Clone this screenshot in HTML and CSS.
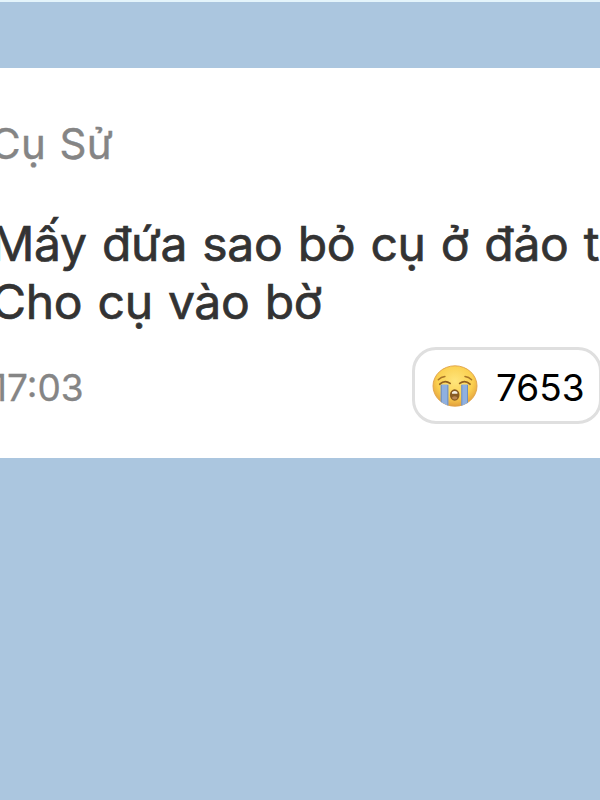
FILE: index.html
```html
<!DOCTYPE html>
<html lang="vi">
<head>
<meta charset="utf-8">
<title>Cụ Sử</title>
<link rel="stylesheet" href="styles.css">
</head>
<body>
<main class="chat">
  <article class="card">
    <div class="name">Cụ Sử</div>
    <div class="message"><div class="line">Mấy đứa sao bỏ cụ ở đảo t</div><div class="line second">Cho cụ vào bờ</div></div>
    <footer class="footer">
      <time class="time">17:03</time>
      <div class="reaction">
        <svg class="emoji" viewBox="0 0 46 42">
          <defs>
            <radialGradient id="face" cx="50%" cy="38%" r="62%">
              <stop offset="0" stop-color="#ffe57c"/>
              <stop offset=".65" stop-color="#fbd050"/>
              <stop offset="1" stop-color="#e3a03c"/>
            </radialGradient>
            <clipPath id="round"><ellipse cx="23" cy="21" rx="22.3" ry="20.5"/></clipPath>
          </defs>
          <ellipse cx="23" cy="21" rx="22" ry="20.2" fill="url(#face)" stroke="#dfa047" stroke-width=".9"/>
          <g clip-path="url(#round)">
            <path d="M8.7 19.5h7.6V42H8.7zM29.4 19.5H36V42h-6.6z" fill="#8fb0e0"/>
            <path d="M9.3 20v22M15.8 20v22M29.8 20v22M35.5 20v22" stroke="#7190bd" stroke-width="1"/>
          </g>
          <path d="M6.3 14.8q2.8-2.8 6.6-3.2M33 11.6q3.8.4 6.6 3.2" fill="none" stroke="#a97628" stroke-width="1.5" stroke-linecap="round"/>
          <path d="M7.8 19.2q5-4.8 10.3-.8M27.7 18.4q5.3-4 10.3.8" fill="none" stroke="#916020" stroke-width="1.8" stroke-linecap="round"/>
          <ellipse cx="22.7" cy="30" rx="4.8" ry="5.8" fill="#875b22"/>
          <path d="M20 27.2q2.7-2.6 5.4 0v1.6H20z" fill="#f4eee0"/>
          <ellipse cx="22.7" cy="32.8" rx="2.7" ry="1.6" fill="#b98552"/>
        </svg>
        <span class="count">7653</span>
      </div>
    </footer>
  </article>
</main>
</body>
</html>
```
FILE: styles.css
```css
* { box-sizing: border-box; }
body {
  margin: 0;
  background: #abc6df;
  font-family: Inter, "Noto Sans", sans-serif;
  overflow: hidden;
}
.chat {
  height: 800px;
  padding-top: 66px;
  border-top: 2px solid #e4f4fb;
  overflow: hidden;
}
.card {
  height: 390px;
  padding-top: 46px;
  background: #fff;
  white-space: nowrap;
  overflow: hidden;
}
.name {
  margin-left: -10px;
  font-size: 42px;
  line-height: 60px;
  letter-spacing: .4px;
  word-spacing: 1px;
  color: #858585;
  -webkit-text-stroke: .4px #858585;
}
.message {
  margin: 41px 0 0 -9px;
  font-size: 48px;
  line-height: 57.5px;
  letter-spacing: -.3px;
  word-spacing: 2px;
  color: #333;
  -webkit-text-stroke: .7px #333;
}
.footer {
  display: flex;
  justify-content: space-between;
  align-items: center;
  width: 610px;
  margin: 17px 0 0 -8px;
}
.time {
  padding-top: 4px;
  font-size: 37px;
  line-height: 46px;
  color: #858585;
  -webkit-text-stroke: .3px #858585;
}
.reaction {
  display: flex;
  align-items: center;
  width: 190px;
  height: 77px;
  padding-left: 17px;
  border: 3px solid #dfdfdf;
  border-radius: 24px;
}
.emoji {
  width: 46px;
  height: 42px;
  flex: none;
}
.count {
  margin-left: 18px;
  padding-top: 4px;
  font-size: 37px;
  line-height: 46px;
  color: #000;
}
```
